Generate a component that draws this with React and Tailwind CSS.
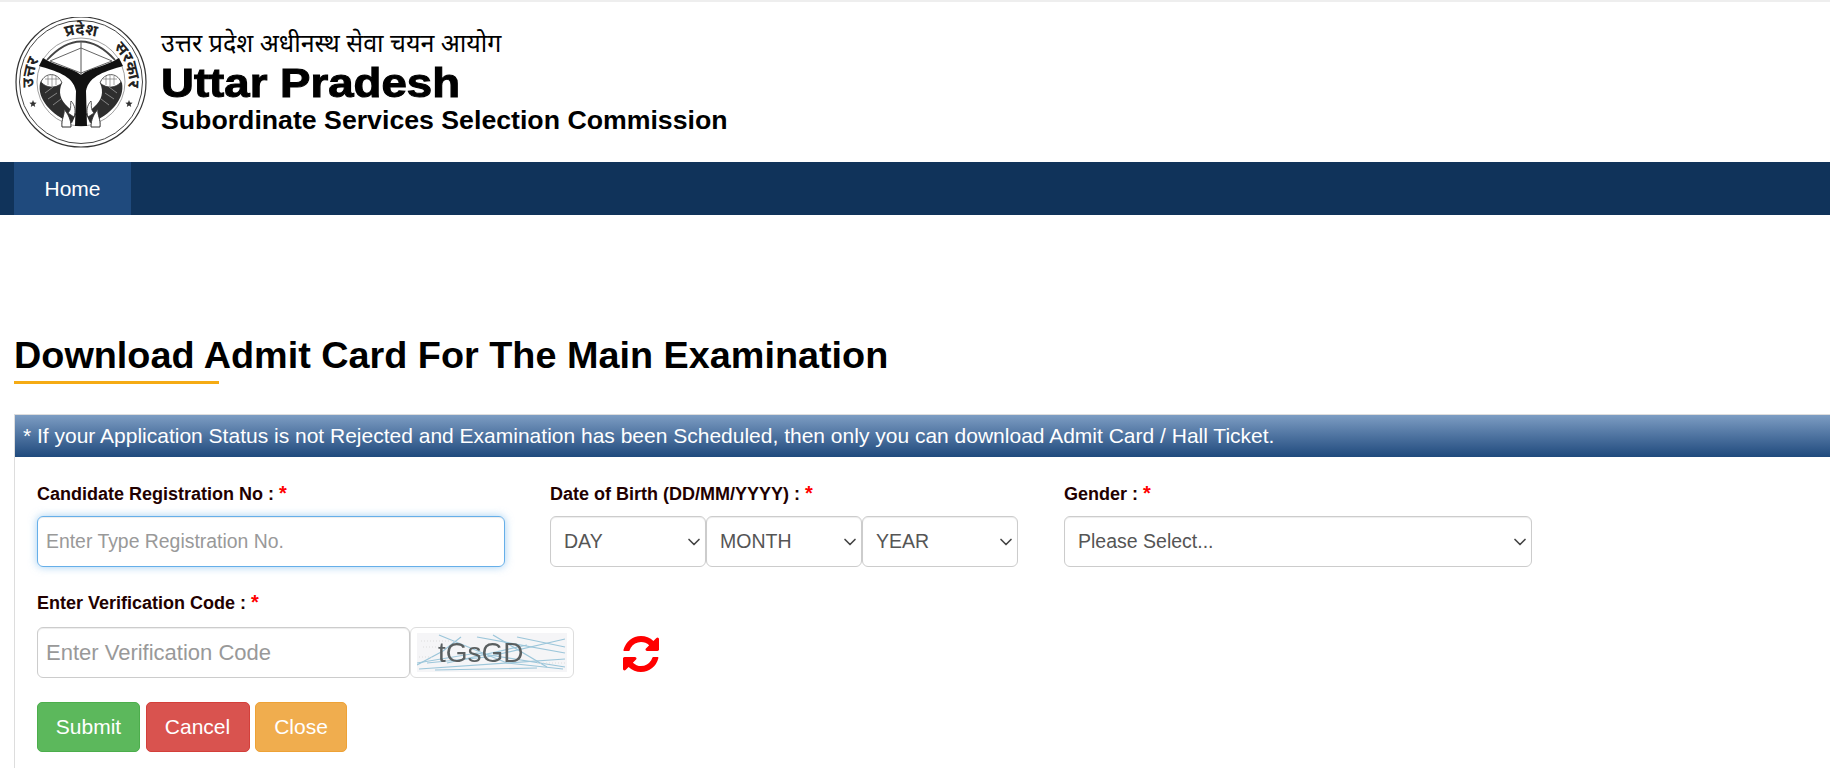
import { ChevronDown } from "lucide-react";

const REFRESH_PATH =
  "M1639 1056q0 5-1 7-64 268-268 434.5t-478 166.5q-146 0-282.5-55t-243.5-157l-129 129q-19 19-45 19t-45-19-19-45v-448q0-26 19-45t45-19h448q26 0 45 19t19 45-19 45l-137 137q71 66 161 102t187 36q134 0 250-65t186-179q11-17 53-117 8-23 30-23h192q13 0 22.5 9.5t9.5 22.5zm25-800v448q0 26-19 45t-45 19h-448q-26 0-45-19t-19-45 19-45l138-138q-148-137-349-137-134 0-250 65t-186 179q-11 17-53 117-8 23-30 23h-199q-13 0-22.5-9.5t-9.5-22.5v-7q65-268 270-434.5t480-166.5q146 0 284 55.5t245 156.5l130-129q19-19 45-19t45 19 19 45z";

function Fish() {
  return (
    <g>
      <path d="M25 66 C22 82 36 98 57 106 L61 97 L53 90 C45 83 43 75 47 66 C42 56 30 56 25 66 Z" fill="#2e2e2e" />
      <path d="M26 65 C30 55 43 55 47 66 C40 72 31 71 26 65 Z" fill="#fff" stroke="#333" strokeWidth="0.8" />
      <path d="M30 62 L44 62 M33 59 L33 68 M37 58 L37 69 M41 59 L41 68" stroke="#666" strokeWidth="0.6" />
      <path d="M30 76 L38 70 M33 82 L42 76 M38 88 L46 82" stroke="#aaa" strokeWidth="0.7" />
      <path d="M47 110 C46 102 50 98 49 92 C53 97 56 102 56 110 Z" fill="#fff" stroke="#333" strokeWidth="1" />
      <path d="M53 96 C57 92 55 88 56 84 C60 88 61 94 59 100 Z" fill="#fff" stroke="#333" strokeWidth="0.8" />
      <path d="M18 83 l1 2.4 2.6.3 -2 1.7 .6 2.6 -2.2-1.4 -2.2 1.4 .6-2.6 -2-1.7 2.6-.3z" fill="#333" />
    </g>
  );
}

function Emblem() {
  return (
    <svg viewBox="0 0 132 132" className="h-[132px] w-[132px] shrink-0">
      <defs>
        <path id="ring" d="M19 72 A47.5 47.5 0 1 1 113 72" />
      </defs>
      <circle cx="66" cy="65" r="65" fill="none" stroke="#333" strokeWidth="1.2" />
      <circle cx="66" cy="65" r="61.5" fill="none" stroke="#444" strokeWidth="1" />
      <circle cx="66" cy="65" r="44" fill="none" stroke="#777" strokeWidth="0.7" />
      <g fontSize="16" fontWeight="700" fill="#222" fontFamily="'Noto Sans','Liberation Serif',serif">
        <text>
          <textPath href="#ring" startOffset="1%">उत्तर</textPath>
        </text>
        <text textAnchor="middle">
          <textPath href="#ring" startOffset="50%">प्रदेश</textPath>
        </text>
        <text textAnchor="end">
          <textPath href="#ring" startOffset="99%">सरकार</textPath>
        </text>
      </g>
      <path d="M32 43 Q66 6 100 43" fill="none" stroke="#444" strokeWidth="1.8" />
      <path d="M35 44 L66 31 L97 44 L66 56 Z" fill="none" stroke="#666" strokeWidth="1" />
      <path d="M66 24 V60" stroke="#555" strokeWidth="1" />
      <Fish />
      <g transform="translate(132 0) scale(-1 1)">
        <Fish />
      </g>
      <path
        d="M28 41 C42 50 56 50 66 58 C76 50 90 50 104 41 L108 49 C92 54 74 58 71 74 L72 109 H60 L61 74 C58 58 40 54 24 49 Z"
        fill="#111"
      />
    </svg>
  );
}

function Captcha() {
  return (
    <svg viewBox="0 0 150 39" className="h-[39px] w-[150px] blur-[0.5px]">
      <rect width="150" height="39" fill="#f5f5f7" />
      <g stroke="#9cc6da" strokeWidth="1.2" fill="none">
        <path d="M0 32 L26 18 L44 4" />
        <path d="M0 30 L60 20 L148 34" />
        <path d="M2 36 L148 26" />
        <path d="M22 2 L90 30 L146 36" />
        <path d="M60 4 L148 20" />
        <path d="M148 6 L70 24 L10 30" />
        <path d="M76 2 L130 34" />
        <path d="M100 4 L148 14" />
        <path d="M18 37 L120 35" />
        <path d="M30 30 L110 12" />
      </g>
      <path d="M4 8 H40 M6 14 H22 M120 30 H148 M2 24 H16" stroke="#ddd" strokeWidth="1" strokeDasharray="1 2" />
      <text x="21" y="29" fontSize="28" fill="#5a5f60" fontFamily="'Liberation Sans',sans-serif">
        tGsGD
      </text>
    </svg>
  );
}

function Field({ label, className, children }) {
  return (
    <div className={className}>
      <label className="block h-[34px] text-[18px] leading-[22px] font-bold text-[#200]">
        {label} : <span className="text-[20px] text-[#f00]">*</span>
      </label>
      {children}
    </div>
  );
}

function Select({ label }) {
  return (
    <div className="relative w-full">
      <select className="h-[51px] w-full appearance-none rounded-[6px] border border-[#ccc] bg-white pl-[13px] text-[19.5px] text-[#555] shadow-[inset_0_1px_1px_rgba(0,0,0,0.075)]">
        <option>{label}</option>
      </select>
      <ChevronDown className="pointer-events-none absolute top-[16px] right-[2px] h-[20px] w-[20px] text-[#444]" strokeWidth={2} />
    </div>
  );
}

export default function App() {
  return (
    <div className="flex h-[768px] flex-col overflow-hidden bg-white font-['Liberation_Sans',Arial,sans-serif] text-black">
      <div className="h-[2px] bg-[#eee]" />

      <header className="flex h-[160px] items-start pl-[15px] pt-[15px]">
        <Emblem />
        <div className="ml-[14px] pt-[11px]">
          <div className="h-[29px] font-['Noto_Sans','Liberation_Serif',serif] text-[25px] leading-[29px]">
            उत्तर प्रदेश अधीनस्थ सेवा चयन आयोग
          </div>
          <div className="mt-[4px] origin-left scale-x-[1.14] text-[40px] leading-[44px] font-bold [-webkit-text-stroke:1px_#000]">
            Uttar Pradesh
          </div>
          <div className="text-[26.7px] leading-[30px] font-bold">
            Subordinate Services Selection Commission
          </div>
        </div>
      </header>

      <nav className="flex h-[53px] bg-[#10335a] pl-[14px]">
        <a className="flex w-[117px] items-center justify-center bg-[#1f4a7d] text-[21px] text-white">
          Home
        </a>
      </nav>

      <main className="flex flex-1 flex-col pl-[14px] pt-[116px]">
        <h1 className="text-[37.8px] leading-[48px] font-bold">
          Download Admit Card For The Main Examination
        </h1>
        <div className="mt-[2px] h-[3px] w-[205px] bg-[#f5ab14]" />

        <section className="mt-[30px] flex-1 border-t border-l border-[#ddd]">
          <div className="flex h-[42px] items-center bg-gradient-to-b from-[#7d9dc3] to-[#1f4a7d] pl-[8px] text-[21px] text-white">
            * If your Application Status is not Rejected and Examination has been Scheduled, then only you can download Admit Card / Hall Ticket.
          </div>

          <div className="px-[22px] pt-[25px]">
            <div className="flex gap-[45px]">
              <Field label="Candidate Registration No" className="w-[468px]">
                <input
                  placeholder="Enter Type Registration No."
                  className="h-[51px] w-full rounded-[6px] border border-[#66afe9] px-[8px] text-[19.4px] text-[#555] shadow-[inset_0_1px_1px_rgba(0,0,0,0.075),0_0_8px_rgba(102,175,233,0.6)] outline-none placeholder:text-[#999]"
                />
              </Field>
              <Field label="Date of Birth (DD/MM/YYYY)" className="w-[468px]">
                <div className="flex">
                  <Select label="DAY" />
                  <Select label="MONTH" />
                  <Select label="YEAR" />
                </div>
              </Field>
              <Field label="Gender" className="ml-[1px] w-[468px]">
                <Select label="Please Select..." />
              </Field>
            </div>

            <div className="mt-[24px]">
              <Field label="Enter Verification Code">
                <div className="mt-[2px] flex items-center">
                  <input
                    placeholder="Enter Verification Code"
                    className="h-[51px] w-[373px] rounded-[6px] border border-[#ccc] px-[8px] text-[22px] text-[#555] shadow-[inset_0_1px_1px_rgba(0,0,0,0.075)] outline-none placeholder:text-[#999]"
                  />
                  <div className="flex h-[51px] w-[164px] items-center justify-center rounded-[6px] border border-[#ddd]">
                    <Captcha />
                  </div>
                  <svg viewBox="0 0 1792 1792" className="mt-[3px] ml-[46px] h-[42px] w-[42px] fill-[#f00]">
                    <path d={REFRESH_PATH} />
                  </svg>
                </div>
              </Field>
            </div>

            <div className="mt-[24px] flex gap-[5.5px]">
              <button className="h-[50px] w-[103px] rounded-[5px] border border-[#4cae4c] bg-[#5cb85c] text-[21px] text-white">Submit</button>
              <button className="h-[50px] w-[104px] rounded-[5px] border border-[#d43f3a] bg-[#d9534f] text-[21px] text-white">Cancel</button>
              <button className="h-[50px] w-[92px] rounded-[5px] border border-[#eea236] bg-[#f0ad4e] text-[21px] text-white">Close</button>
            </div>
          </div>
        </section>
      </main>
    </div>
  );
}
